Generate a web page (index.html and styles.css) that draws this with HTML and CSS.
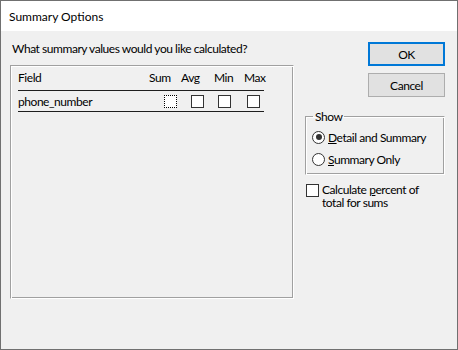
FILE: index.html
```html
<!DOCTYPE html>
<html lang="en">
<head>
  <meta charset="UTF-8" />
  <title>Summary Options</title>
  <link rel="stylesheet" href="styles.css">
</head>
<body>
  <div class="window">
    <div class="titlebar">Summary Options</div>
    <div class="content">
      <div class="left-col">
        <div class="prompt">What summary values would you like calculated?</div>
        <div class="frame">
          <div class="grid head">
            <span class="field-name">Field</span>
            <span class="col sum">Sum</span>
            <span class="col avg">Avg</span>
            <span class="col min">Min</span>
            <span class="col max">Max</span>
          </div>
          <div class="grid row">
            <span class="field-name">phone_number</span>
            <span class="col sum"><span class="check focused"></span></span>
            <span class="col avg"><span class="check"></span></span>
            <span class="col min"><span class="check"></span></span>
            <span class="col max"><span class="check"></span></span>
          </div>
        </div>
      </div>
      <div class="right-col">
        <button class="btn default">OK</button>
        <button class="btn">Cancel</button>
        <fieldset class="group">
          <legend>Show</legend>
          <div class="option"><span class="radio on"></span><span><u>D</u>etail and Summary</span></div>
          <div class="option"><span class="radio"></span><span><u>S</u>ummary Only</span></div>
        </fieldset>
        <div class="percent">
          <span class="check"></span>
          <span class="percent-text">Calculate <u>p</u>ercent of<br>total for sums</span>
        </div>
      </div>
    </div>
  </div>
</body>
</html>
```

FILE: styles.css
```css
body {
  margin: 0;
  background: #f0f0f0;
  font-family: 'Lato', 'Liberation Sans', sans-serif;
  font-size: 12px;
  letter-spacing: -0.45px;
  color: #000;
}

.window {
  width: 458px;
  height: 350px;
  box-sizing: border-box;
  border: 1px solid #707070;
  background: #f0f0f0;
}

.titlebar {
  height: 30px;
  background: #fff;
  padding-left: 8px;
  display: flex;
  align-items: center;
  letter-spacing: 0;
}

.content {
  display: flex;
  padding-left: 9px;
}

.left-col {
  width: 284px;
}

.prompt {
  margin-top: 10px;
  margin-bottom: 9px;
  padding-left: 2px;
  line-height: 15px;
}

.frame {
  width: 284px;
  height: 234px;
  box-sizing: border-box;
  border: 1px solid;
  border-color: #a0a0a0 #fff #fff #a0a0a0;
  box-shadow: inset 1px 1px #fff, inset -1px -1px #a0a0a0;
}

.grid {
  display: grid;
  grid-template-columns: 127px 33px 29px 30px 27px;
  width: 246px;
  margin-left: 7px;
  border-bottom: 1px solid #1e1e1e;
}

.head {
  padding-top: 4px;
  padding-bottom: 5px;
  line-height: 15px;
}

.row {
  height: 20px;
  align-items: center;
  line-height: 15px;
}

.head .sum { padding-left: 4px; }
.head .avg { padding-left: 3px; }
.head .min { padding-left: 7px; }
.head .max { padding-left: 7px; }

.row .col { display: flex; }
.row .sum .check { margin-left: 19px; }
.row .avg .check { margin-left: 13px; }
.row .min .check { margin-left: 11px; }
.row .max .check { margin-left: 10px; }

.check {
  display: inline-block;
  width: 13px;
  height: 13px;
  box-sizing: border-box;
  border: 1px solid #333;
  background: #fff;
  flex: none;
}

.check.focused {
  border: 1px dotted #000;
  box-shadow: inset 0 0 0 1px #fff;
}

.right-col {
  width: 140px;
  margin-left: 11px;
  margin-top: 11px;
  display: flex;
  flex-direction: column;
  align-items: flex-end;
}

.btn {
  width: 77px;
  height: 24px;
  margin: 0 0 7px 0;
  padding: 0;
  background: #e1e1e1;
  border: 1px solid #adadad;
  font-family: inherit;
  font-size: 12px;
  letter-spacing: inherit;
  color: #000;
}

.btn.default {
  border: 2px solid #0078d7;
}

.group {
  align-self: stretch;
  margin: 5px 0 0 0;
  padding: 2px 0 4px 6px;
  border: 1px solid;
  border-color: #a0a0a0 #fff #fff #a0a0a0;
  box-shadow: inset 1px 1px #fff, inset -1px -1px #a0a0a0;
}

.group legend {
  padding: 0 2px;
  margin-left: 1px;
  line-height: 15px;
}

.option {
  display: flex;
  align-items: center;
  height: 22px;
  gap: 3px;
}

.radio {
  width: 13px;
  height: 13px;
  box-sizing: border-box;
  border: 1px solid #333;
  border-radius: 50%;
  background: #fff;
  position: relative;
}

.radio.on::after {
  content: '';
  position: absolute;
  left: 2.5px;
  top: 2.5px;
  width: 6px;
  height: 6px;
  border-radius: 50%;
  background: #333;
}

.percent {
  align-self: stretch;
  display: flex;
  align-items: flex-start;
  gap: 3px;
  margin-top: 8px;
  padding-left: 1px;
}

.percent .check {
  margin-top: 1px;
}

.percent-text {
  line-height: 13px;
}
```
